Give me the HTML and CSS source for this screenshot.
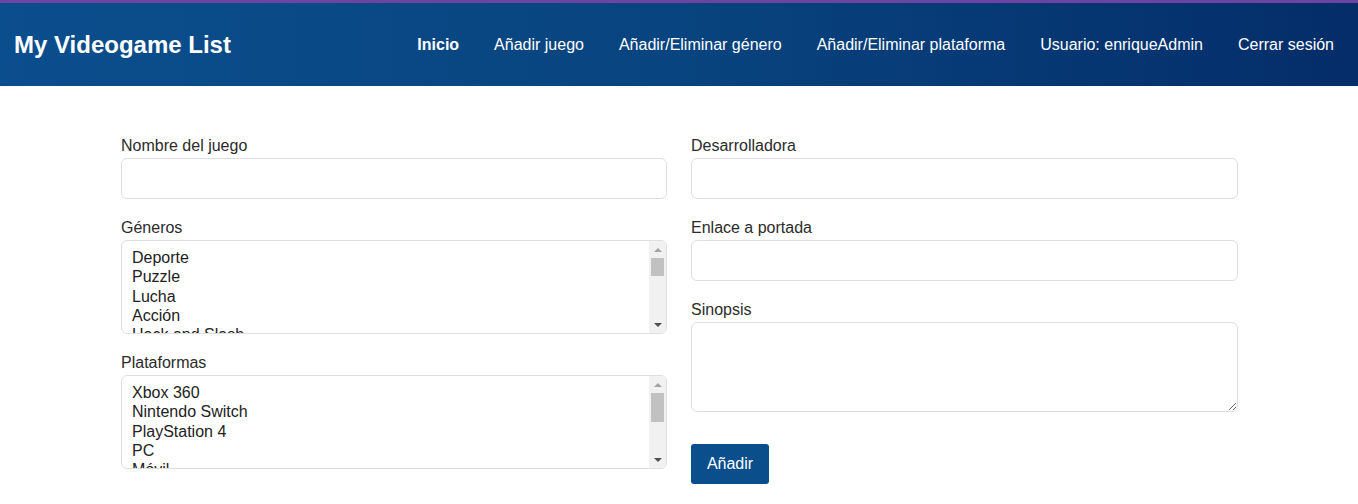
FILE: index.html
```html
<!DOCTYPE html>
<html lang="es">
<head>
<meta charset="utf-8">
<title>My Videogame List</title>
<link rel="stylesheet" href="styles.css">
</head>
<body>
<header class="topbar">
  <div class="navbar">
    <a class="brand" href="#">My Videogame List</a>
    <nav class="nav">
      <a class="nav-link active" href="#">Inicio</a>
      <a class="nav-link" href="#">Añadir juego</a>
      <a class="nav-link" href="#">Añadir/Eliminar género</a>
      <a class="nav-link" href="#">Añadir/Eliminar plataforma</a>
      <a class="nav-link" href="#">Usuario: enriqueAdmin</a>
      <a class="nav-link" href="#">Cerrar sesión</a>
    </nav>
  </div>
</header>
<main class="container">
  <form class="form-grid">
    <div class="col">
      <div class="field">
        <label class="label">Nombre del juego</label>
        <input class="control" type="text">
      </div>
      <div class="field">
        <label class="label">Géneros</label>
        <div class="listbox">
          <div class="options">
            <div class="option">Deporte</div>
            <div class="option">Puzzle</div>
            <div class="option">Lucha</div>
            <div class="option">Acción</div>
            <div class="option">Hack and Slash</div>
            <div class="option">Aventura</div>
          </div>
          <div class="scrollbar">
            <div class="arrow-btn"><span class="tri-up"></span></div>
            <div class="track"><div class="thumb thumb-genres"></div></div>
            <div class="arrow-btn"><span class="tri-down"></span></div>
          </div>
        </div>
      </div>
      <div class="field">
        <label class="label">Plataformas</label>
        <div class="listbox">
          <div class="options">
            <div class="option">Xbox 360</div>
            <div class="option">Nintendo Switch</div>
            <div class="option">PlayStation 4</div>
            <div class="option">PC</div>
            <div class="option">Móvil</div>
            <div class="option">Xbox One</div>
          </div>
          <div class="scrollbar">
            <div class="arrow-btn"><span class="tri-up"></span></div>
            <div class="track"><div class="thumb thumb-platforms"></div></div>
            <div class="arrow-btn"><span class="tri-down"></span></div>
          </div>
        </div>
      </div>
    </div>
    <div class="col">
      <div class="field">
        <label class="label">Desarrolladora</label>
        <input class="control" type="text">
      </div>
      <div class="field">
        <label class="label">Enlace a portada</label>
        <input class="control" type="text">
      </div>
      <div class="field">
        <label class="label">Sinopsis</label>
        <textarea class="control textarea"></textarea>
      </div>
      <div class="actions">
        <button class="btn" type="button">Añadir</button>
      </div>
    </div>
  </form>
</main>
</body>
</html>
```
FILE: styles.css
```css
* { box-sizing: border-box; }
html, body { margin: 0; padding: 0; }
body {
  font-family: "Liberation Sans", Arial, sans-serif;
  font-size: 16px;
  color: #2b2b2b;
  background: #fff;
}
.topbar {
  border-top: 3px solid #6e44a3;
  background: linear-gradient(to right, #0b4e8d 0%, #08447f 50%, #042d69 100%);
}
.navbar {
  height: 83px;
  display: flex;
  align-items: center;
  justify-content: space-between;
  padding: 0 24px 0 14px;
}
.brand {
  color: #fff;
  font-weight: bold;
  font-size: 24px;
  text-decoration: none;
}
.nav {
  display: flex;
  gap: 35px;
}
.nav-link {
  color: #fff;
  text-decoration: none;
  font-size: 16px;
}
.nav-link.active { font-weight: bold; }
.container {
  width: 1117px;
  margin: 0 0 0 121px;
  padding-top: 47px;
}
.form-grid {
  display: grid;
  grid-template-columns: 546px 547px;
  column-gap: 24px;
}
.col { display: flex; flex-direction: column; }
.field { display: flex; flex-direction: column; margin-bottom: 16px; }
.label {
  line-height: 24px;
  padding-top: 1px;
  margin-bottom: 0;
  color: #2b2b2b;
}
.control {
  height: 41px;
  border: 1px solid #dcdfe3;
  border-radius: 6px;
  font: inherit;
  padding: 6px 12px;
  background: #fff;
}
.textarea {
  height: 90px;
  resize: vertical;
}
.listbox {
  height: 94px;
  border: 1px solid #dcdfe3;
  border-radius: 6px;
  display: flex;
  overflow: hidden;
}
.options {
  flex: 1;
  overflow: hidden;
  padding: 7px 10px 0;
  color: #222;
}
.option { line-height: 19.3px; white-space: nowrap; }
.scrollbar {
  width: 17px;
  background: #f1f1f1;
  display: flex;
  flex-direction: column;
}
.arrow-btn {
  height: 17px;
  display: flex;
  align-items: center;
  justify-content: center;
}
.tri-up, .tri-down {
  width: 0; height: 0;
  border-left: 4px solid transparent;
  border-right: 4px solid transparent;
}
.tri-up { border-bottom: 4px solid #a3a3a3; }
.tri-down { border-top: 4px solid #505050; }
.track { flex: 1; }
.thumb {
  margin: 0 2px;
  background: #c1c1c1;
}
.thumb-genres { height: 18px; }
.thumb-platforms { height: 29px; }
.actions { margin-top: 16px; }
.btn {
  height: 40px;
  width: 78px;
  border: none;
  border-radius: 3px;
  background: #0a4f8c;
  color: #fff;
  font: inherit;
  font-size: 16px;
  cursor: pointer;
}
```
